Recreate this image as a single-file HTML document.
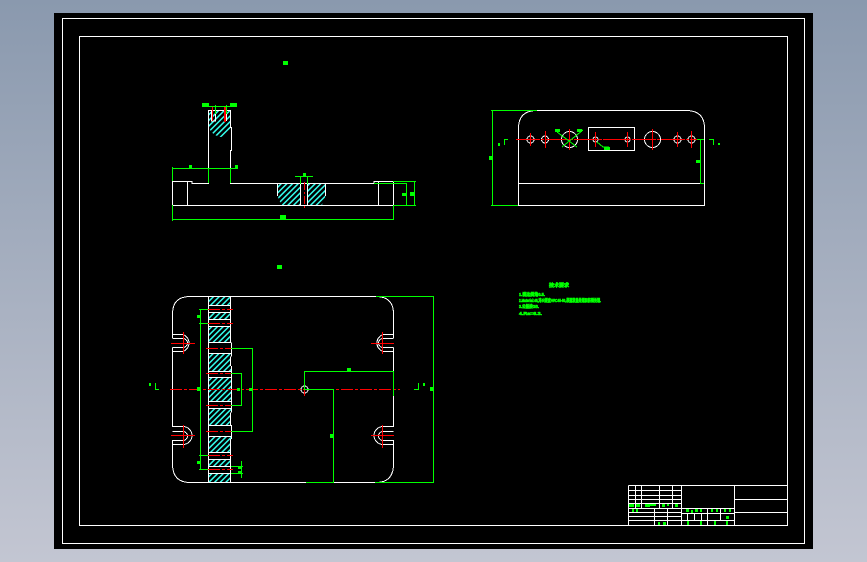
<!DOCTYPE html>
<html>
<head>
<meta charset="utf-8">
<style>
html,body{margin:0;padding:0;width:867px;height:562px;overflow:hidden;background:linear-gradient(#8a99ae,#c3c6d2);}
svg{position:absolute;left:0;top:0;display:block;}
text{font-family:"Liberation Sans","Noto Sans CJK SC",sans-serif;font-weight:bold;fill:#0f0;stroke:#0f0;stroke-width:.6;}
</style>
</head>
<body>
<svg width="867" height="562" viewBox="0 0 867 562" xmlns="http://www.w3.org/2000/svg" shape-rendering="crispEdges">
<defs>
<pattern id="h" width="4" height="4" patternUnits="userSpaceOnUse" patternTransform="rotate(45)">
<rect width="4" height="4" fill="#000"/><rect width="1.4" height="4" fill="#3fe"/>
</pattern>
</defs>
<rect x="54" y="13" width="759" height="536" fill="#000"/>
<g fill="none" stroke="#fff" stroke-width="1">
<rect x="62.5" y="18.5" width="742" height="525"/>
<rect x="79.5" y="36.5" width="708" height="489"/>
</g>

<!-- hatch fills -->
<g fill="url(#h)" shape-rendering="auto">
<path d="M209 111H231V127Q228 137 220 137Q212 135 209 128Z"/>
<path d="M278 184H300V205H282Q277 198 277 190Z"/>
<path d="M308 184H325Q326 192 325 198L322 205H308Z"/>
<rect x="209" y="297" width="21" height="9"/>
<rect x="209" y="312" width="21" height="7"/>
<rect x="209" y="326" width="21" height="16"/>
<rect x="209" y="354" width="22" height="17"/>
<rect x="209" y="377" width="22" height="25"/>
<rect x="209" y="409" width="22" height="16"/>
<rect x="209" y="437" width="22" height="15"/>
<rect x="209" y="460" width="21" height="6"/>
<rect x="209" y="474" width="21" height="8"/>
</g>

<!-- top view white -->
<g fill="none" stroke="#fff" stroke-width="1">
<path d="M172.500 205.500V181.500H192V183.500H208.500V110.500H230.500V127.500H231.500V150.500H230.500V183.500H374V181.500H393.500V205.500H172.500"/>
<path d="M187.500 181.500V205.500M378.500 181.500V205.500"/>
<path d="M300.500 183.500V205.500M307.500 183.500V205.500"/>
<path d="M211.500 111V121H215.500V111M226.500 111V121"/>
<path d="M277.500 184V196M325.500 184V196"/>
</g>
<g stroke="#f00" fill="none">
<path d="M304.500 182V208" stroke-dasharray="8 2 2 2"/>
<path d="M212.500 107V121M224.500 107V122M225.500 107V122"/>
</g>
<g stroke="#0f0" fill="none">
<path d="M172.500 167V181M172.500 168.500H238M208.500 168V183M230.500 168V183"/>
<path d="M172.500 205V221M172 219.500H393.500V205"/>
<path d="M393 181.500H416M374 183.500H406.500V205.500M414.500 181V206M393 205.500H416"/>
<path d="M205 106.500H235M215.500 105V114M226.500 105V114"/>
<path d="M295 176.500H313M300.500 176V184M307.500 176V184"/>
</g>
<g fill="#0f0">
<rect x="189" y="165" width="3" height="3"/><rect x="235" y="165" width="3" height="3"/>
<rect x="202" y="103" width="7" height="4"/><rect x="230" y="103" width="7" height="4"/>
<rect x="303" y="173" width="3" height="3"/>
<rect x="280" y="215" width="6" height="4"/>
<rect x="402" y="193" width="4" height="3"/><rect x="410" y="192" width="4" height="4"/>
<rect x="283" y="61" width="5" height="4"/>
<rect x="277" y="265" width="5" height="4"/>
</g>

<!-- right view -->
<g fill="none" stroke="#fff" stroke-width="1">
<path d="M518.500 205.500V128Q518.500 110.500 537 110.500H686Q704.500 110.500 704.500 128V205.500Z"/>
<path d="M518.500 183.500H704.500"/>
<rect x="588.500" y="127.500" width="46" height="23"/>
<circle cx="530.500" cy="139.500" r="3.500"/><circle cx="545" cy="139.500" r="3.500"/>
<circle cx="569.500" cy="139.500" r="8"/><circle cx="652.500" cy="139.500" r="8"/>
<circle cx="595.500" cy="139.500" r="2.500"/><circle cx="627.500" cy="139.500" r="2.500"/>
<circle cx="677.500" cy="139.500" r="3.500"/><circle cx="691.500" cy="139.500" r="3.500"/>
</g>
<g stroke="#f00" fill="none">
<path d="M516 139.500H702" stroke-dasharray="24 1 3 1"/>
<path d="M530.500 133V146M545.500 131V148M569.500 129V150M595.500 132V147M627.500 132V147M652.500 129V150M677.500 132V147M691.500 131V148"/>
</g>
<g stroke="#0f0" fill="none">
<path d="M491 110.500H537M492.500 110V206M491 205.500H518"/>
<path d="M700.500 139V184M700 183.500H704M697 139.500H704"/>
<path d="M504.500 145V139.500H508M709 139.500H713.500V145"/>
<path d="M557 132L577 147M583 130L562 147"/>
<path d="M597 142L603 147H609"/>
<path d="M499 145V146"/>
</g>
<g fill="#0f0">
<rect x="555" y="129" width="5" height="3"/><rect x="577" y="129" width="5" height="3"/>
<rect x="489" y="156" width="3" height="4"/>
<rect x="696" y="160" width="4" height="3"/>
<rect x="604" y="147" width="6" height="3"/>
<rect x="718" y="143" width="2" height="2"/>
<rect x="498" y="143" width="2" height="3"/>
</g>

<!-- bottom view -->
<g fill="none" stroke="#fff" stroke-width="1">
<path d="M172.500 338V314Q172.500 296.500 190 296.500H376Q393.500 296.500 393.500 314V338"/>
<path d="M172.500 347.500V427M172.500 440V464Q172.500 482.500 190 482.500H376Q393.500 482.500 393.500 464V440M393.500 427V347.500M393.500 389V371"/>
<!-- left slots -->
<path d="M172.500 334.500H183A9 9 0 0 1 183 351.500H172.500M172.500 338.500H183A4.500 4.500 0 0 1 183 347.500H172.500"/>
<path d="M172.500 426.500H183A9 9 0 0 1 183 444.500H172.500M172.500 431.500H183A4 4 0 0 1 183 440.500H172.500"/>
<!-- right slots -->
<path d="M393.500 334.500H383A9 9 0 0 0 383 351.500H393.500M393.500 338.500H383A4.500 4.500 0 0 0 383 347.500H393.500"/>
<path d="M393.500 426.500H383A9 9 0 0 0 383 444.500H393.500M393.500 431.500H383A4 4 0 0 0 383 440.500H393.500"/>
<!-- section column -->
<path d="M208.500 296.500V482.500M230.500 296.500V342.500M231.500 342.500V356.500M230.500 356.500V366M231.500 366V412.500M230.500 412.500V425M231.500 425V439M230.500 439V482.500"/>
<path d="M208.500 305.500H230.500M208.500 312.500H230.500M208.500 319.500H230.500M208.500 326.500H230.500M208.500 342.500H231M208.500 353.500H231M208.500 371.500H231M208.500 377.500H231M208.500 401.500H231M208.500 408.500H231M208.500 425.500H231M208.500 436.500H231M208.500 452.500H231M208.500 459.500H231M208.500 466.500H231M208.500 473.500H231"/>
<circle cx="304.500" cy="389.500" r="3.500"/>
</g>
<g stroke="#f00" fill="none">
<path d="M170 389.500H400" stroke-dasharray="12 2 3 2"/>
<path d="M171 343.500H195M183.500 332V354M171 435.500H195M183.500 425V448"/>
<path d="M371 343.500H394M382.500 332V354M371 435.500H394M382.500 425V448"/>
<path d="M304.500 386V396"/>
<path d="M208 309.500H233M208 323.500H233M206 348.500H232M206 373.500H232M206 405.500H232M206 431.500H232M208 455.500H233M208 469.500H233" stroke-dasharray="12 2 3 2"/>
</g>
<g stroke="#0f0" fill="none">
<path d="M199 309.500H208M199 323.500H208M200.500 309V469M199 455.500H208M199 469.500H208"/>
<path d="M231 348.500H252.500V431.500H231"/>
<path d="M231 373.500H241.500V405.500H231"/>
<path d="M241.500 461V478M231 466.500H243M231 473.500H243"/>
<path d="M155.500 383V389.500H159"/>
<path d="M304.500 371V389.500H333.500V482.500M304.500 371.500H393.500V396"/>
<path d="M306 482.500H334M375 482.500H434M376 296.500H434M433.500 296V483"/>
<path d="M418.500 383V389.500H414"/>
</g>
<g fill="#0f0">
<rect x="197" y="315" width="3" height="3"/><rect x="197" y="387" width="4" height="4"/><rect x="197" y="461" width="3" height="3"/>
<rect x="237" y="388" width="3" height="3"/><rect x="249" y="388" width="3" height="3"/>
<rect x="238" y="466" width="4" height="3"/><rect x="238" y="471" width="3" height="3"/>
<rect x="347" y="368" width="4" height="3"/>
<rect x="330" y="434" width="3" height="4"/>
<rect x="430" y="387" width="3" height="4"/>
<rect x="149" y="383" width="2" height="3"/><rect x="423" y="383" width="2" height="3"/>
</g>

<!-- notes -->
<text x="549" y="287" font-size="5">技术要求</text>
<text x="519" y="296" font-size="4.600" textLength="26" lengthAdjust="spacingAndGlyphs">1.锐边倒角0.5.</text>
<text x="519" y="302" font-size="4.600" textLength="82" lengthAdjust="spacingAndGlyphs">2.Material:45,淬火硬度HRC45-50,表面发黑处理和防锈处理.</text>
<text x="519" y="308" font-size="4.600" textLength="20" lengthAdjust="spacingAndGlyphs">3.公差按GB.</text>
<text x="519" y="315" font-size="4.600" textLength="23" lengthAdjust="spacingAndGlyphs">4.Ra=6.3.</text>

<!-- title block -->
<g fill="none" stroke="#fff" stroke-width="1">
<path d="M628.500 485.500H787.500M628.500 485.500V525.500M681.500 485.500V525.500M734.500 485.500V525.500M734.500 499.500H787.500M734.500 512.500H787.500"/>
<path d="M628.500 490.500H681.500M628.500 495.500H681.500M628.500 499.500H681.500M628.500 503.500H681.500M628.500 508.500H734.500M628.500 512.500H681.500M628.500 516.500H681.500M628.500 520.500H681.500"/>
<path d="M635.500 485.500V508.500M641.500 485.500V508.500M659.500 485.500V508.500M672.500 485.500V508.500M654.500 508.500V525.500M667.500 508.500V525.500"/>
<path d="M681.500 513.500H734.500M681.500 520.500H734.500M687.500 513.500V520.500M694.500 513.500V520.500M701.500 513.500V520.500M707.500 508.500V525.500M720.500 508.500V520.500"/>
</g>
<g fill="#0f0">
<rect x="629" y="504" width="5" height="3"/><rect x="636" y="504" width="4" height="3"/>
<rect x="645" y="504" width="5" height="3"/><rect x="650" y="504" width="6" height="2"/>
<rect x="662" y="504" width="3" height="3"/><rect x="667" y="504" width="2" height="2"/><rect x="675" y="504" width="3" height="3"/>
<rect x="632" y="509" width="2" height="3"/><rect x="636" y="509" width="2" height="3"/>
<rect x="658" y="522" width="2" height="3"/><rect x="663" y="522" width="3" height="3"/>
<rect x="686" y="509" width="3" height="3"/><rect x="691" y="510" width="2" height="3"/><rect x="695" y="509" width="3" height="3"/><rect x="700" y="509" width="2" height="3"/>
<rect x="711" y="509" width="2" height="3"/><rect x="716" y="509" width="2" height="3"/><rect x="724" y="509" width="2" height="3"/><rect x="729" y="509" width="2" height="3"/>
<rect x="726" y="516" width="3" height="3"/>
<rect x="687" y="521" width="2" height="4"/><rect x="700" y="521" width="2" height="4"/><rect x="714" y="521" width="2" height="4"/><rect x="726" y="521" width="2" height="4"/>
</g>
</svg>
</body>
</html>
